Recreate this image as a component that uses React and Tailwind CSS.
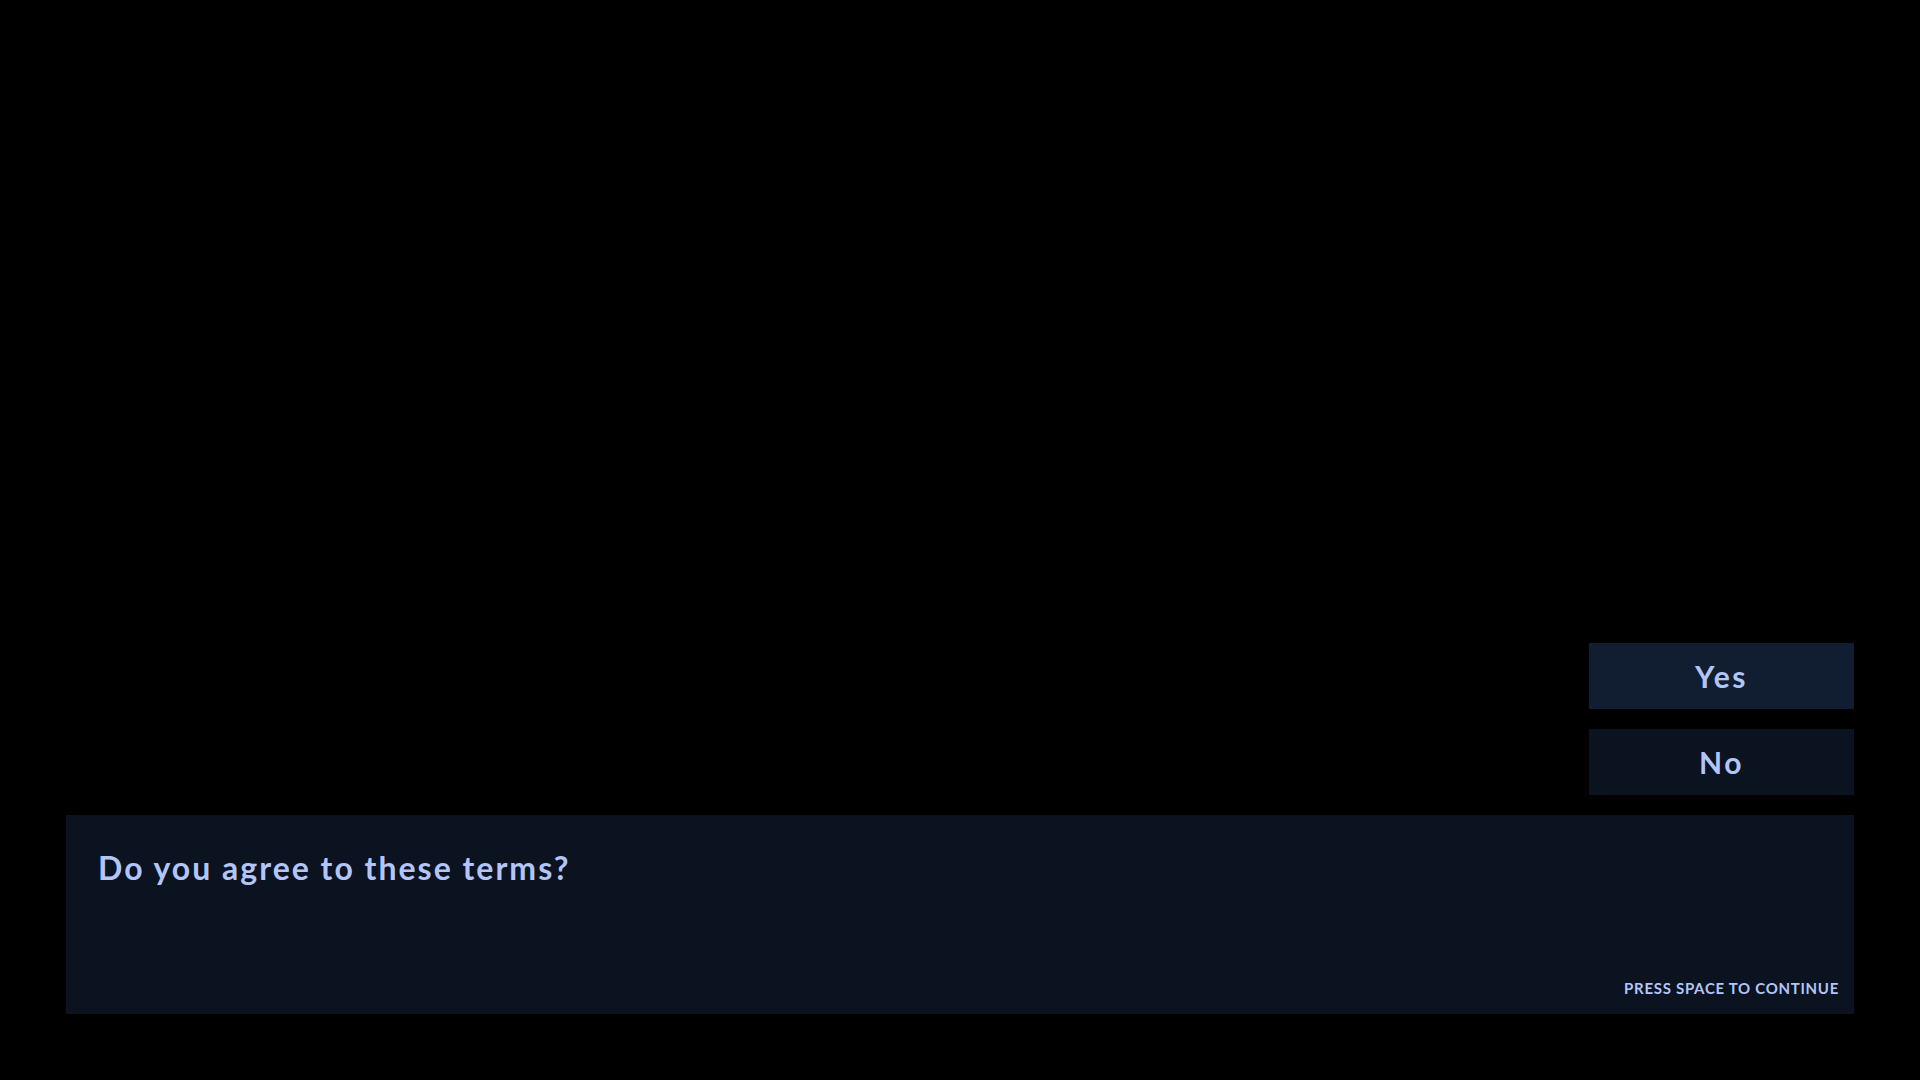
import React from 'react';

const choices = [
    { label: 'Yes', active: true },
    { label: 'No', active: false },
];

const App = () => {
    return (
        <div className="w-full h-screen bg-black flex flex-col justify-end p-[66px] font-['Lato','Noto_Sans',sans-serif] text-[#b3c5f7]">
            {/* choice buttons */}
            <div className="flex flex-col items-end gap-5 mb-5">
                {choices.map((c) => (
                    <button
                        key={c.label}
                        className={`w-[265px] h-[66px] flex items-center justify-center text-[30px] font-bold tracking-[2.5px] leading-none ${c.active ? 'bg-[#111d31]' : 'bg-[#0b1220]'}`}
                    >
                        {c.label}
                    </button>
                ))}
            </div>

            {/* dialogue box */}
            <div className="h-[199px] w-full bg-[#0b1220] flex flex-col pl-8 pr-[15px] pt-[37px] pb-[18px]">
                <p className="text-[32px] font-bold leading-none tracking-[2px]">
                    Do you agree to these terms?
                </p>
                <span className="mt-auto self-end text-[15px] font-bold leading-none tracking-[0.7px]">
                    PRESS SPACE TO CONTINUE
                </span>
            </div>
        </div>
    );
};

export default App;
